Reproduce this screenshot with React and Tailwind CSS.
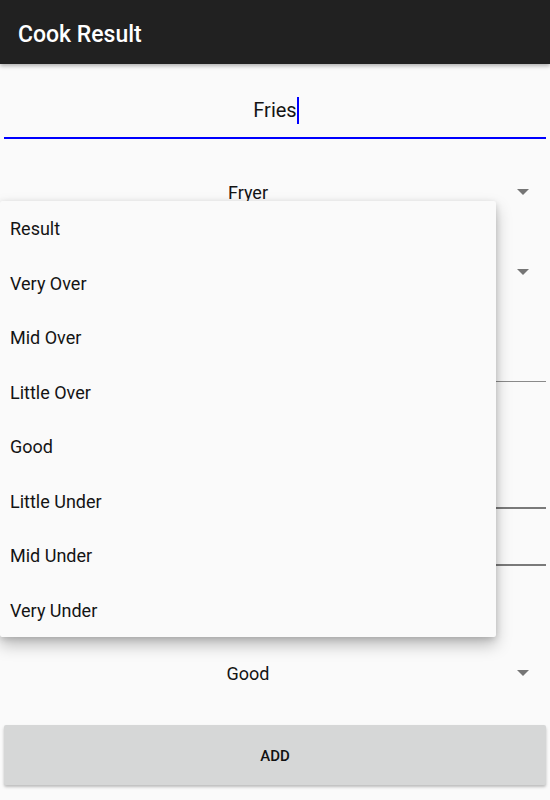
import { useState } from "react";

const options = [
  "Result",
  "Very Over",
  "Mid Over",
  "Little Over",
  "Good",
  "Little Under",
  "Mid Under",
  "Very Under",
];

const Arrow = () => (
  <svg width="12" height="6" viewBox="0 0 12 6" className="absolute right-[17px]">
    <path d="M0 0 L12 0 L6 6 Z" fill="#757575" />
  </svg>
);

const Spinner = ({ value, className = "" }) => (
  <div className={`relative h-12 flex items-center justify-center pr-[54px] ${className}`}>
    <span className="text-[18px] text-[#141414]">{value}</span>
    <Arrow />
  </div>
);

export default function App() {
  const [name] = useState("Fries");

  return (
    <div
      className="relative w-[550px] h-[800px] bg-[#fafafa] overflow-hidden"
      style={{ fontFamily: "Roboto, 'Noto Sans', sans-serif" }}
    >
      {/* toolbar */}
      <header className="relative z-10 h-16 bg-[#212121] flex items-center pt-[6px] px-[18px] shadow-[0_2px_4px_rgba(0,0,0,0.3)]">
        <h1 className="text-white text-[23px] font-medium">Cook Result</h1>
      </header>

      <div className="px-1">
        {/* name field */}
        <div className="pt-[30px] pb-[11px] border-b-2 border-[#0000ff] flex justify-center">
          <span className="text-[20px] leading-[32px] text-[#141414] flex items-center pl-[2px]">
            {name}
            <span className="inline-block w-[2px] h-[27px] bg-[#0000ff]" />
          </span>
        </div>

        <Spinner value="Fryer" className="mt-[29px]" />
        <Spinner value="" className="mt-[32px]" />

        <div className="mt-[85px] h-px bg-[#8a8a8a]" />
        <div className="mt-[125px] h-[2px] bg-[#7a7a7a]" />
        <div className="mt-[55px] h-[2px] bg-[#7a7a7a]" />

        <Spinner value="Good" className="mt-[83px]" />

        <button className="mt-[28px] w-full h-[60px] pt-[2px] bg-[#d6d7d7] text-[15px] font-medium text-[#111] shadow-[0_2px_3px_rgba(0,0,0,0.25)] rounded-[2px]">
          ADD
        </button>
      </div>

      {/* open dropdown */}
      <ul className="absolute left-0 top-[201px] w-[496px] bg-[#fafafa] rounded-[2px] shadow-[0_8px_16px_rgba(0,0,0,0.25),0_2px_6px_rgba(0,0,0,0.15)] z-20">
        {options.map((o) => (
          <li key={o} className="h-[54.5px] flex items-center pt-[1px] px-[10px] text-[18px] text-[#141414]">
            {o}
          </li>
        ))}
      </ul>
    </div>
  );
}
